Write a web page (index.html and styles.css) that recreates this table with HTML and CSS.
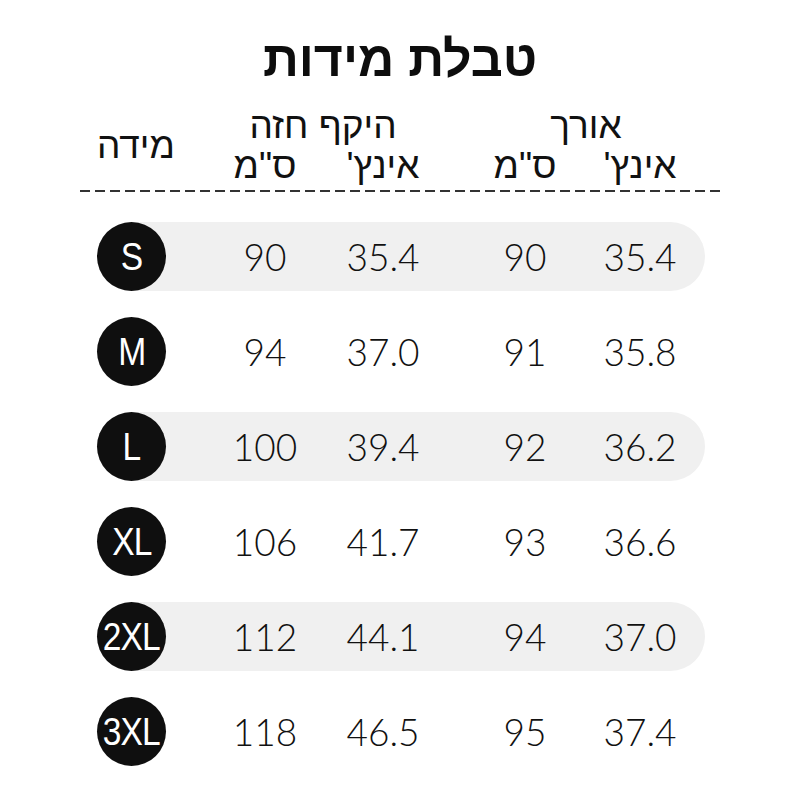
FILE: index.html
```html
<!DOCTYPE html>
<html lang="he">
<head>
<meta charset="utf-8">
<link rel="stylesheet" href="styles.css">
</head>
<body>
<div class="page">
  <h1 class="title">טבלת מידות</h1>
  <div class="head">
    <div class="h-size">מידה</div>
    <div class="h-group h-chest">היקף חזה</div>
    <div class="h-group h-length">אורך</div>
    <div class="h-unit">ס"מ</div>
    <div class="h-unit rtl">אינץ'</div>
    <div class="h-unit">ס"מ</div>
    <div class="h-unit rtl">אינץ'</div>
  </div>
  <div class="rule"></div>
  <div class="rows">
    <div class="row shaded"><div class="badge"><span>S</span></div><div class="num">90</div><div class="num">35.4</div><div class="num">90</div><div class="num">35.4</div></div>
    <div class="row"><div class="badge"><span>M</span></div><div class="num">94</div><div class="num">37.0</div><div class="num">91</div><div class="num">35.8</div></div>
    <div class="row shaded"><div class="badge"><span>L</span></div><div class="num">100</div><div class="num">39.4</div><div class="num">92</div><div class="num">36.2</div></div>
    <div class="row"><div class="badge"><span>XL</span></div><div class="num">106</div><div class="num">41.7</div><div class="num">93</div><div class="num">36.6</div></div>
    <div class="row shaded"><div class="badge"><span>2XL</span></div><div class="num">112</div><div class="num">44.1</div><div class="num">94</div><div class="num">37.0</div></div>
    <div class="row"><div class="badge"><span>3XL</span></div><div class="num">118</div><div class="num">46.5</div><div class="num">95</div><div class="num">37.4</div></div>
  </div>
</div>
</body>
</html>
```
FILE: styles.css
```css
html, body {
  margin: 0;
  padding: 0;
  background: #ffffff;
}

body {
  width: 800px;
  height: 800px;
  overflow: hidden;
  font-family: "Liberation Sans", "DejaVu Sans", sans-serif;
  color: #111111;
}

.page {
  padding-top: 29px;
}

.title {
  margin: 0;
  text-align: center;
  font-size: 50px;
  line-height: 60px;
  font-weight: 700;
  color: #0d0d0d;
}

.head {
  margin-top: 18px;
  margin-left: 97px;
  display: grid;
  grid-template-columns: 108px 120px 116px 168px 62px;
  grid-template-rows: 38px 38px;
  justify-items: center;
  align-items: center;
  font-size: 37px;
  color: #111111;
}

.h-size {
  grid-column: 1;
  grid-row: 1 / 3;
  justify-self: start;
  padding-top: 2px;
}

.h-chest {
  grid-column: 2 / 4;
  grid-row: 1;
}

.h-length {
  grid-column: 4 / 6;
  grid-row: 1;
  padding-left: 60px;
}

.h-unit {
  grid-row: 2;
  padding-top: 3px;
}

.rtl {
  direction: rtl;
}

.rule {
  margin: 7px 0 0 80px;
  width: 640px;
  height: 2px;
  background: repeating-linear-gradient(90deg, #333333 0 10px, transparent 10px 15px);
}

.rows {
  margin-top: 30px;
  margin-left: 97px;
  display: flex;
  flex-direction: column;
  gap: 26px;
}

.row {
  width: 608px;
  height: 69px;
  border-radius: 35px;
  display: grid;
  grid-template-columns: 108px 120px 116px 168px 62px;
  justify-items: center;
  align-items: center;
}

.row.shaded {
  background: #f0f0f0;
}

.badge {
  justify-self: start;
  width: 69px;
  height: 69px;
  border-radius: 50%;
  background: #0f0f0f;
  color: #ffffff;
  display: flex;
  align-items: center;
  justify-content: center;
  font-family: "Liberation Sans", sans-serif;
  font-size: 39px;
  letter-spacing: -1px;
  white-space: nowrap;
}

.badge span {
  display: inline-block;
  transform: scaleX(0.86);
}

.num {
  font-family: "Lato", "Liberation Sans", sans-serif;
  font-weight: 300;
  font-size: 37px;
  color: #111111;
  white-space: nowrap;
}
```
